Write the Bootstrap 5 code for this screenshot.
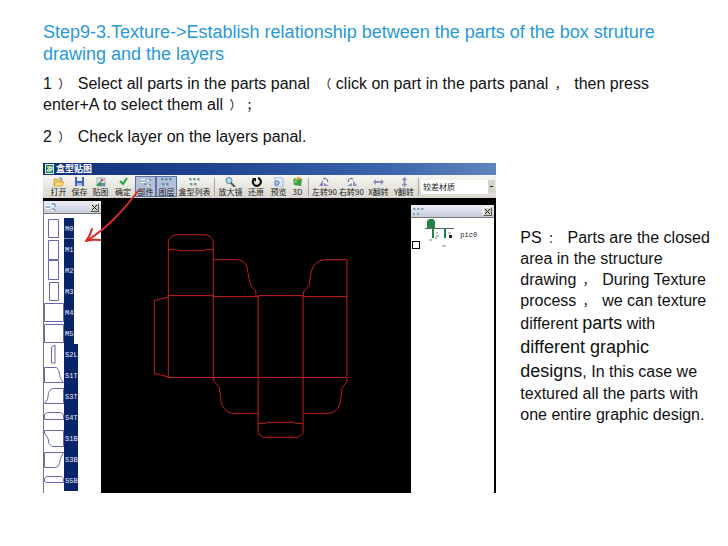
<!DOCTYPE html>
<html lang="en">
<head>
<meta charset="utf-8">
<meta name="viewport" content="width=device-width, initial-scale=1">
<title>Step 9-3 Texture</title>
<link rel="stylesheet" href="https://cdn.jsdelivr.net/npm/bootstrap@5.3.0/dist/css/bootstrap.min.css">
<style>
body{font-family:"Liberation Sans",Arial,"Noto Sans CJK SC",sans-serif;font-size:16px;line-height:21px;color:#111;background:#fff}
.slide{padding:21px 18px 20px 43px}
.slide-title{font-size:18px;line-height:22px;color:#2898dc;font-weight:400;margin:0 0 8px}
.step-line{margin:0 0 11px;max-width:640px}
.wide-mark{display:inline-block;width:17px;font:400 12px/16px "Noto Sans CJK SC",sans-serif;padding-left:2px}
.wide-open{text-align:right}
.shot-row{margin-top:16px;gap:24px}
.app-window{flex:454 1 0;min-width:0;position:relative;background:#000;font-family:"Noto Sans CJK SC",sans-serif}
.notes{flex:190 1 0;padding-top:64px}
.notes .bigger{font-size:18px;line-height:24px}
.app-title{height:12px;background:linear-gradient(90deg,#123177,#1d4290 35%,#3b64ab 75%,#5f84bd);color:#fff;font:700 9px/12px "Noto Sans CJK SC",sans-serif;padding-left:2px;gap:2px}
.app-tools{height:23px;background:linear-gradient(#f6f5f1,#d9d7cd);padding-left:5px}
.tool{border:1px solid transparent;background:none;padding:0;width:21px;flex:none;height:21px;font-size:8px;line-height:9px;color:#222;white-space:nowrap;display:flex;flex-direction:column;align-items:center;justify-content:flex-end;overflow:hidden}
.tool svg{width:11px;height:10px;flex:none}
.tool-on{background:#b4c0d8;border-color:#5871a6}
.tool-slim{width:17px}.tool-mid{width:24px}.tool-wide{width:27px}.tool-list{width:35px}
.tool-gap{width:1px;height:18px;background:#aaa89f;flex:none;margin:0 2px}
.material{flex:1 1 0;min-width:0;height:14px;background:#fff;border:0;padding:0 0 0 2px;border-radius:0;font-size:8px;line-height:14px;color:#222;appearance:none}
.drop-arrow{width:7px;height:13px;background:#d5d2c8;flex:none;margin-right:1px}
.work{min-height:295px}
.parts-panel{width:58px;flex:none;background:#fff;margin-top:3px;border-left:1px solid #777}
.stage{flex:1 1 0;min-width:0}
.layers-panel{width:83px;flex:none;background:#fff;margin:7px 2px 0 0}
.panel-head{height:13px;background:linear-gradient(#eceef4,#c6ccdb);border-bottom:1px solid #777;padding:0 2px 0 1px}
.panel-head svg{width:12px;height:9px}
.close-x{width:9px;height:9px;padding:0;border:1px solid;border-color:#fff #555 #555 #fff;background:#d4d0c8;display:flex;align-items:center;justify-content:center}
.close-x svg{width:5px;height:5px}
.part{height:21px}
.part svg{width:20px;height:21px;flex:none}
.part-name{background:#0a246a;color:#e8ecf8;width:10px;height:21px;font:7px/23px "Liberation Mono",monospace;overflow:hidden;padding-left:1px}
.part-long{width:14px}
.part:nth-child(1) .part-name{border-bottom:1px dashed #8794bd}
.layer-row{padding:1px 0 0 1px}
.layer-row input{appearance:none;width:8px;height:8px;border:1px solid #000;margin:22px 0 0;flex:none}
.layer-row svg{width:34px;height:30px;margin-left:4px;flex:none}
.layer-row label{font:7px/9px "Liberation Mono",monospace;color:#222;padding:12px 0 0 2px}
.pointer{position:absolute;left:38px;top:16px;width:76px;height:68px;pointer-events:none}
</style>
<script src="https://cdn.jsdelivr.net/npm/bootstrap@5.3.0/dist/js/bootstrap.bundle.min.js"></script>
</head>
<body>
<main class="slide">
<h1 class="slide-title">Step9-3.Texture-&gt;Establish relationship between the parts of the box struture drawing and the layers</h1>
<p class="step-line">1 <span class="wide-mark">）</span> Select all parts in the parts panal <span class="wide-mark wide-open">（</span> click on part in the parts panal <span class="wide-mark">，</span> then press enter+A to select them all <span class="wide-mark">）</span><span class="wide-mark">；</span></p>
<p class="step-line">2 <span class="wide-mark">）</span> Check layer on the layers panal.</p>
<div class="shot-row d-flex align-items-start">
<section class="app-window">
<div class="app-title d-flex align-items-center">
<svg width="9" height="10" viewBox="0 0 9 10"><path d="M0 0h9v10H0z" fill="#dff2df"/><path d="M1 1h7v8H1z" fill="#23824a"/><path d="M2 3h3L2 7h3M5 3v5M5 3h2v3H5" fill="none" stroke="#fff"/></svg>
<span>盒型贴图</span></div>
<div class="app-tools d-flex align-items-center">
<button class="tool"><svg viewBox="0 0 11 10"><path d="M1 9V2h3l1 1h4v2" fill="#f3d36b" stroke="#b48a2a" stroke-width=".7"/><path d="M1 9l2-4h8L9 9z" fill="#ffdf75" stroke="#b48a2a" stroke-width=".6"/><path d="M6 1q3-1 3 2" stroke="#4878b8" fill="none"/></svg>打开</button>
<button class="tool"><svg viewBox="0 0 11 10"><path d="M1 0h9v9H1z" fill="#4660bd"/><path d="M3 0h5v4H3z" fill="#e9eef9"/><path d="M3 6h5v3H3z" fill="#aab9e4"/></svg>保存</button>
<button class="tool"><svg viewBox="0 0 11 10"><path d="M2 1h8v8H2z" fill="#dcecf1" stroke="#789" stroke-width=".6"/><path d="M1 9l4-5 4 5z" fill="#3d9c4c"/><circle cx="7" cy="3" r="1.6" fill="#ce5a58"/><path d="M6 6h4v3H6z" fill="#6388bd"/></svg>贴图</button>
<button class="tool tool-mid"><svg viewBox="0 0 11 10"><path d="M2 4l3 3 4-6" fill="none" stroke="#18a62c" stroke-width="2"/></svg>确定</button>
<button class="tool tool-on"><svg viewBox="0 0 11 10"><path d="M1 2h4v4H1zM7 1h3v3H7zM7 6h3v3H7z" fill="#fff"/><path d="M1 4h4M7 2h3v2M7 7h3v2M4 7h2" fill="none" stroke="#27538f" stroke-width=".8"/></svg>部件</button>
<button class="tool tool-on"><svg viewBox="0 0 11 10"><path d="M0 2h2M4 2h2M8 2h2M1 7h2M5 7h2" stroke="#468077" stroke-width="1.3"/><path d="M2 1v3M6 1v3M10 1v3M3 6v3M7 6v3" stroke="#5f7db0" stroke-width=".7"/></svg>图层</button>
<button class="tool tool-list"><svg viewBox="0 0 11 10"><path d="M0 2h2M4 2h2M8 2h2M1 7h2M5 7h2" stroke="#3b965e" stroke-width="1.3"/><path d="M2 1v3M6 1v3M10 1v3M3 6v3M7 6v3" stroke="#607fb2" stroke-width=".7"/></svg>盒型列表</button>
<span class="tool-gap"></span>
<button class="tool tool-wide"><svg viewBox="0 0 11 10"><circle cx="4" cy="3.5" r="3" fill="#b8e1ef" stroke="#527b91"/><path d="M6 6l4 4" stroke="#4a5052" stroke-width="1.8"/></svg>放大镜</button>
<button class="tool tool-mid"><svg viewBox="0 0 11 10"><path d="M3 2a4 4 0 1 0 4-1" fill="none" stroke="#111" stroke-width="2.2"/><path d="M1 1h4v4z" fill="#111"/></svg>还原</button>
<button class="tool"><svg viewBox="0 0 11 10"><path d="M2 0h6l2 2v8H2z" fill="#dfe9fa" stroke="#7e9bce" stroke-width=".7"/><circle cx="4" cy="6" r="2.2" fill="#aac9ef" stroke="#547cae"/></svg>预览</button>
<button class="tool tool-slim"><svg viewBox="0 0 11 10"><path d="M1 2l3-1 6 1-1 7-7-1z" fill="#3b9d3b"/><path d="M1 2l4 1 5-1-3-2z" fill="#e3a43b"/><path d="M1 2l4 1v3H2z" fill="#60c85e"/></svg>3D</button>
<span class="tool-gap"></span>
<button class="tool tool-wide"><svg viewBox="0 0 11 10"><path d="M0 9l4-6v6zM5 9h5L5 6z" fill="#8e83bd"/><path d="M4 2q4-2 5 3" fill="none" stroke="#46598f"/></svg>左转90</button>
<button class="tool tool-wide"><svg viewBox="0 0 11 10"><path d="M11 9L7 3v6zM6 9H1l5-3z" fill="#8794c4"/><path d="M7 2Q3 0 2 5" fill="none" stroke="#46598f"/></svg>右转90</button>
<button class="tool tool-wide"><svg viewBox="0 0 11 10"><path d="M0 5l3-3v2h5V2l3 3-3 3V6H3v2z" fill="#928fc2"/></svg>X翻转</button>
<button class="tool tool-mid"><svg viewBox="0 0 11 10"><path d="M5.500 0l3 3h-2v4h2l-3 3-3-3h2V3h-2z" fill="#928fc2"/></svg>Y翻转</button>
<span class="tool-gap"></span>
<select class="material" aria-label="材质"><option>较差材质</option></select><svg class="drop-arrow" viewBox="0 0 7 13"><path d="M2 6h3v1H2z" fill="#222"/></svg>
</div>
<div class="work d-flex align-items-stretch">
<aside class="parts-panel">
<div class="panel-head d-flex align-items-center justify-content-between"><svg viewBox="0 0 12 9"><path d="M1 2h4v4H1zM7 1h4v3H7zM7 5h4v3H7z" fill="#fff"/><path d="M1 4h4M7 1h3v3M7 6h3v2" stroke="#286bb8" fill="none"/></svg><button class="close-x" aria-label="Close parts"><svg viewBox="0 0 5 5"><path d="M0 0l5 5M5 0L0 5" stroke="#111"/></svg></button></div>
<div class="part-list pt-1" id="partList"></div>
</aside>
<div class="stage"><svg width="100%" height="100%" viewBox="100 198 311 295" fill="none" stroke="#c4201c" stroke-width="1">
<path d="M167.500 377.500V241.500q1-5 7-7h31q6 2 7 7V377.500M167.500 249.500h9l1 1h26l1-1h8M167.500 295.500h45M167.500 297L153.500 300.500V373.500l14 3.500M167.500 377.500H346.500M212.500 296.500h45M257.500 295.500h45M302.500 296.500h44"/>
<path d="M212.500 259.500H237q9 1 10 11 2 15 5 17l3 3 .5 6M302.500 296.500l1-6 5-5 2-13q2-11 13-13h23V381.500l-5 7-1 10q-1 13-11 15h-27M212.500 377.500l1 4 5 6 2 15q2 9 11 11h26"/>
<path d="M257.500 295.500v138l5 4h35l5-4v-138M257.500 423.500h8l1-1h27l1 1h8"/></svg></div>
<aside class="layers-panel">
<div class="panel-head d-flex align-items-center justify-content-between"><svg viewBox="0 0 12 9"><path d="M1 2h2M5 2h2M9 2h2M1 7h2M5 7h2" stroke="#397879"/><path d="M3 1v2M7 1v2M11 1v2" stroke="#6584b9" stroke-width=".7"/></svg><button class="close-x" aria-label="Close layers"><svg viewBox="0 0 5 5"><path d="M0 0l5 5M5 0L0 5" stroke="#111"/></svg></button></div>
<div class="layer-row d-flex align-items-start"><input type="checkbox" id="pic0"><svg viewBox="0 0 34 30"><path d="M3 9V2l2-2h4l2 2v7z" fill="#238548"/><path d="M1 9.500h29" stroke="#456e55"/><path d="M8 10h2v9H8zM20 10h2v9h-2z" fill="#238548"/><path d="M12 14h2M12 17h3M11 19h2M5 21h3M18 27h4M24 14h3" stroke="#789"/><path d="M25 16h3v3h-3z" fill="#222"/></svg><label for="pic0">pic0</label></div>
</aside>
</div>
<svg class="pointer" viewBox="80 179 76 68" fill="none" stroke="#d92a2a" stroke-width="2" stroke-linecap="round" stroke-linejoin="round"><path d="M137 191Q124 208 113 219Q101 231 87 240M91 229q-2 7-6 12q7-2 14-1"/></svg>
</section>
<aside class="notes">PS <span class="wide-mark">：</span> Parts are the closed area in the structure drawing <span class="wide-mark">，</span> During Texture process <span class="wide-mark">，</span> we can texture different <span class="bigger">parts</span> with <span class="bigger">different graphic designs</span>, In this case we textured all the parts with one entire graphic design.</aside>
</div>
</main>
<script>
/* outline of every box part, drawn in a 20 x 21 cell */
const parts=[["M0","M4.500 1.500h10v18h-10z"],["M1","M4.500 1.500h10v19h-10z"],["M2","M4.500 .5h10v19h-10z"],["M3","M5.500 1.500h9v18h-9z"],["M4","M.5 1.500h19v18H.5z"],["M5","M.5 1.500h19v18H.5z"],["S2L","M7.500 3l3.500-2v18H7.500z"],["S1T","M.5 17.500v-15h12q3 2 3 7l1 4 3 4z"],["S3T","M.5 17.500l3-4 1-6q1-5 5-5h10v15z"],["S4T","M.5 12.500v-5l3-2h13l3 2v5z"],["S1B","M.5 2.500h19v16H8q-4-2-4-8L.5 5z"],["S3B","M.5 3.500h19l-3 6-1 5q-1 4-4 4H.5z"],["S5B","M.5 8.500l2-2h15l2 2v4H3l-2.500-1z"]];
document.getElementById("partList").innerHTML=parts.map(([n,d])=>`<div class="part d-flex"><svg viewBox="0 0 20 21"><path d="${d}" fill="none" stroke="#6569ab" stroke-width="1"/></svg><span class="part-name ${n.length>2?"part-long":""}">${n}</span></div>`).join("");
</script>
</body>
</html>
